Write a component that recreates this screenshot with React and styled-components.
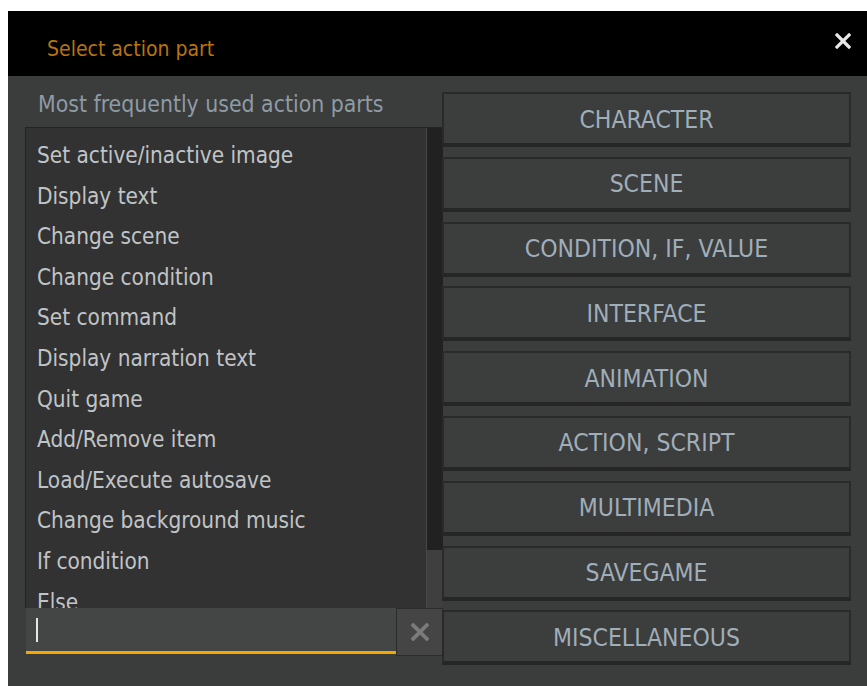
import React from "react";
import styled, { createGlobalStyle } from "styled-components";

const Global = createGlobalStyle`
  html, body {
    margin: 0;
    padding: 0;
    background: #ffffff;
    overflow: hidden;
  }
  body {
    font-family: "DejaVu Sans Condensed", "DejaVu Sans", sans-serif;
    font-stretch: condensed;
  }
`;

const Page = styled.div`
  padding: 11px 0 0 8px;
  width: 867px;
  height: 686px;
  box-sizing: border-box;
`;

const Dialog = styled.div`
  width: 859px;
  height: 675px;
  background: #3b3c3c;
  display: flex;
  flex-direction: column;
`;

const Header = styled.div`
  height: 65px;
  background: #000000;
  display: flex;
  align-items: center;
  justify-content: space-between;
  padding: 0 15px 0 39px;
  flex-shrink: 0;
`;

const Title = styled.div`
  color: #b8730f;
  font-size: 21px;
  margin-top: 10px;
`;

const CloseButton = styled.div`
  width: 18px;
  height: 18px;
  display: flex;
  align-items: center;
  justify-content: center;
  margin-top: -5px;
`;

const Body = styled.div`
  flex: 1;
  display: grid;
  grid-template-columns: 418px 408px;
  padding: 0 16px 0 17px;
`;

const LeftColumn = styled.div`
  display: flex;
  flex-direction: column;
`;

const Label = styled.div`
  color: #8e9ba4;
  font-size: 22.8px;
  height: 51px;
  padding: 15px 0 0 13px;
  box-sizing: border-box;
  white-space: nowrap;
`;

const ListFrame = styled.div`
  height: 481px;
  display: flex;
  border-top: 1px solid #242424;
  border-left: 1px solid #242424;
  box-sizing: border-box;
`;

const List = styled.div`
  flex: 1;
  background: #323232;
  overflow: hidden;
  padding-top: 7px;
  border-right: 1px solid #474747;
`;

const Item = styled.div`
  height: 40.6px;
  line-height: 40.6px;
  color: #c0c4c7;
  font-size: 22.4px;
  padding-left: 11px;
  white-space: nowrap;
`;

const Scrollbar = styled.div`
  width: 16px;
  display: flex;
  flex-direction: column;
  background: #3f3f3f;
`;

const ScrollTrack = styled.div`
  height: 422px;
  background: #212121;
`;

const SearchRow = styled.div`
  display: flex;
  height: 48px;
`;

const SearchBox = styled.div`
  width: 370px;
  height: 46px;
  margin-left: 1px;
  background: #444545;
  border-bottom: 3px solid #f2a900;
  box-sizing: border-box;
  display: flex;
  align-items: center;
  padding-left: 10px;
`;

const Caret = styled.div`
  width: 2px;
  height: 24px;
  background: #e6e6e6;
`;

const ClearButton = styled.div`
  width: 47px;
  height: 48px;
  background: #454545;
  border: 1px solid #2c2c2c;
  box-sizing: border-box;
  display: flex;
  align-items: center;
  justify-content: center;
`;

const ButtonColumn = styled.div`
  display: flex;
  flex-direction: column;
  gap: 9.8px;
  padding-top: 16px;
  margin-left: -1px;
`;

const CategoryButton = styled.div`
  height: 55px;
  box-sizing: border-box;
  background: #3c3d3d;
  border-top: 2px solid #2a2a2a;
  border-left: 2px solid #2a2a2a;
  border-right: 2px solid #2a2a2a;
  border-bottom: 4px solid #262626;
  display: flex;
  align-items: center;
  justify-content: center;
  padding-top: 1px;
  color: #a0aeb9;
  font-size: 24.5px;
  white-space: nowrap;
`;

const mostUsed = [
  "Set active/inactive image",
  "Display text",
  "Change scene",
  "Change condition",
  "Set command",
  "Display narration text",
  "Quit game",
  "Add/Remove item",
  "Load/Execute autosave",
  "Change background music",
  "If condition",
  "Else",
];

const categories = [
  "CHARACTER",
  "SCENE",
  "CONDITION, IF, VALUE",
  "INTERFACE",
  "ANIMATION",
  "ACTION, SCRIPT",
  "MULTIMEDIA",
  "SAVEGAME",
  "MISCELLANEOUS",
];

const Cross = ({ size, color, width }) => (
  <svg width={size} height={size} viewBox="0 0 16 16">
    <path d="M2 2 L14 14 M14 2 L2 14" stroke={color} strokeWidth={width} strokeLinecap="square" />
  </svg>
);

export default function App() {
  return (
    <Page>
      <Global />
      <Dialog>
        <Header>
          <Title>Select action part</Title>
          <CloseButton>
            <Cross size={16} color="#e8e8e8" width={3.2} />
          </CloseButton>
        </Header>
        <Body>
          <LeftColumn>
            <Label>Most frequently used action parts</Label>
            <ListFrame>
              <List>
                {mostUsed.map((name) => (
                  <Item key={name}>{name}</Item>
                ))}
              </List>
              <Scrollbar>
                <ScrollTrack />
              </Scrollbar>
            </ListFrame>
            <SearchRow>
              <SearchBox>
                <Caret />
              </SearchBox>
              <ClearButton>
                <Cross size={18} color="#7b7b7b" width={3.4} />
              </ClearButton>
            </SearchRow>
          </LeftColumn>
          <ButtonColumn>
            {categories.map((name) => (
              <CategoryButton key={name}>{name}</CategoryButton>
            ))}
          </ButtonColumn>
        </Body>
      </Dialog>
    </Page>
  );
}
